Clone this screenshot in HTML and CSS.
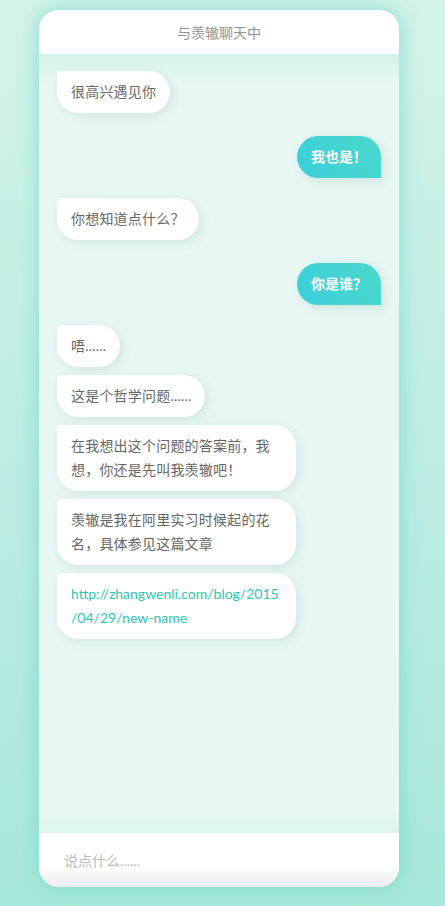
FILE: index.html
```html
<!DOCTYPE html>
<html lang="zh">
<head>
<meta charset="utf-8">
<title>与羡辙聊天中</title>
<link rel="stylesheet" href="styles.css">
</head>
<body>
<div class="phone">
  <div class="header">与羡辙聊天中</div>
  <div class="chat">
    <div class="msg them">很高兴遇见你</div>
    <div class="msg me">我也是！</div>
    <div class="msg them">你想知道点什么？</div>
    <div class="msg me">你是谁？</div>
    <div class="msg them">唔......</div>
    <div class="msg them">这是个哲学问题......</div>
    <div class="msg them">在我想出这个问题的答案前，我想，你还是先叫我羡辙吧！</div>
    <div class="msg them">羡辙是我在阿里实习时候起的花名，具体参见这篇文章</div>
    <div class="msg them link-msg"><a class="link" href="#">http://zhangwenli.com/blog/2015/04/29/new-name</a></div>
  </div>
  <div class="footer"><span class="placeholder">说点什么......</span></div>
</div>
</body>
</html>
```

FILE: styles.css
```css
html, body {
  margin: 0;
  padding: 0;
  height: 100%;
}
body {
  background: linear-gradient(to bottom, #d2f2eb 0%, #a8e7db 100%);
  font-family: Lato, "Noto Sans CJK SC", sans-serif;
  font-size: 14px;
  padding: 10px 0 0 39px;
  box-sizing: border-box;
  overflow: hidden;
}
.phone {
  width: 360px;
  height: 877px;
  border-radius: 20px;
  overflow: hidden;
  display: flex;
  flex-direction: column;
  background: #e8f8f4;
  box-shadow: 0 0 18px 2px rgba(100, 212, 190, 0.55);
}
.header {
  height: 44px;
  flex: none;
  background: #fff;
  color: #949494;
  display: flex;
  align-items: center;
  justify-content: center;
  font-size: 14px;
}
.chat {
  flex: 1;
  display: flex;
  flex-direction: column;
  align-items: flex-start;
  padding: 17px 18px;
  background:
    linear-gradient(to bottom, #d1f2ea 0px, rgba(232, 248, 244, 0) 28px),
    linear-gradient(to top, #dbf4ee 0px, rgba(232, 248, 244, 0) 22px),
    #e7f7f3;
}
.msg {
  line-height: 24px;
  padding: 9px 14px;
  max-width: 239px;
  width: max-content;
  box-sizing: border-box;
  word-break: break-all;
}
.msg + .msg {
  margin-top: 8px;
}
.them {
  background: #fff;
  color: #666;
  border-radius: 4px 21px 21px 21px;
  box-shadow: 3px 3px 10px rgba(60, 120, 110, 0.13);
  letter-spacing: 0.2px;
}
.link-msg {
  letter-spacing: 0;
  line-break: anywhere;
}
.me {
  align-self: flex-end;
  background: linear-gradient(60deg, #3ccfda 0%, #4ad8cc 100%);
  color: #fff;
  font-weight: bold;
  border-radius: 21px 21px 0 21px;
  box-shadow: 3px 3px 10px rgba(60, 120, 110, 0.15);
}
.msg.me {
  margin-top: 23px;
}
.me + .them {
  margin-top: 20px;
}
.link {
  color: #2cc7b0;
  text-decoration: none;
}
.footer {
  height: 54px;
  flex: none;
  background: linear-gradient(to bottom, #fff 0%, #fff 60%, #ececec 100%);
  display: flex;
  align-items: center;
  padding-left: 25px;
}
.placeholder {
  color: #bbb;
  font-size: 14px;
}
```
